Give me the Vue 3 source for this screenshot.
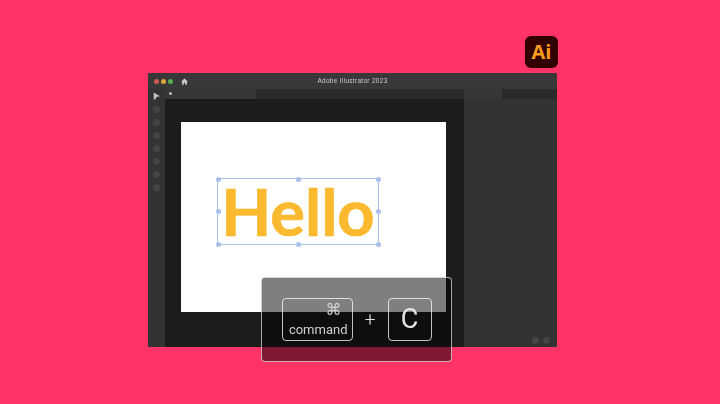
<script setup>
const tools = [0, 1, 2, 3, 4, 5, 6]
const handles = [
  { x: 0, y: 0 }, { x: 50, y: 0 }, { x: 100, y: 0 },
  { x: 0, y: 50 }, { x: 100, y: 50 },
  { x: 0, y: 100 }, { x: 50, y: 100 }, { x: 100, y: 100 },
]
</script>

<template>
  <main class="page">
    <div class="stage">
      <div class="ai-logo">Ai</div>

      <section class="window">
        <header class="titlebar">
          <div class="lights">
            <i class="red"></i>
            <i class="yellow"></i>
            <i class="green"></i>
          </div>
          <svg class="home" viewBox="0 0 12 12" width="7" height="7">
            <path d="M6 1 L12 6.5 H10.2 V11.5 H7.2 V8 H4.8 V11.5 H1.8 V6.5 H0 Z" fill="#c9c9c9" />
          </svg>
          <div class="title">Adobe Illustrator 2023</div>
        </header>

        <div class="body">
          <aside class="toolbar">
            <svg class="arrow" viewBox="0 0 10 10" width="7" height="8">
              <path d="M1 0 L10 5.5 L5.5 6 L3 10 L1 10 Z" fill="#c4c4c4" />
            </svg>
            <span v-for="t in tools" :key="t" class="tool"></span>
          </aside>

          <div class="center">
            <div class="tabs">
              <div class="tab"><i></i></div>
            </div>
            <div class="canvas">
              <div class="artboard">
                <div class="selection">
                  <span class="hello">Hello</span>
                  <i
                    v-for="h in handles"
                    :key="h.x + '-' + h.y"
                    class="handle"
                    :style="{ left: h.x + '%', top: h.y + '%' }"
                  ></i>
                </div>
              </div>
            </div>
          </div>

          <aside class="panel">
            <div class="panel-top">
              <div class="panel-tab"></div>
              <div class="panel-tab-dark"></div>
            </div>
            <div class="panel-foot">
              <i></i>
              <i></i>
            </div>
          </aside>
        </div>
      </section>

      <div class="shortcut">
        <div class="key key-command">
          <span class="glyph">⌘</span>
          <span class="word">command</span>
        </div>
        <span class="plus">+</span>
        <div class="key key-c">C</div>
      </div>
    </div>
  </main>
</template>

<style>
html,
body {
  margin: 0;
  background: #ff3366;
}
</style>

<style scoped>
.page {
  width: 720px;
  height: 404px;
  overflow: hidden;
  background: #ff3366;
  font-family: "Liberation Sans", Arial, sans-serif;
}

.stage {
  position: relative;
  width: 720px;
  height: 404px;
  padding: 73px 163px 0 148px;
  box-sizing: border-box;
  filter: blur(0.5px);
}

.ai-logo {
  position: absolute;
  left: 525px;
  top: 36px;
  width: 33px;
  height: 32px;
  border-radius: 6px;
  background: #330000;
  color: #f79c1e;
  font-family: "Open Sans", sans-serif;
  font-weight: 700;
  font-size: 20px;
  line-height: 32px;
  text-align: center;
}

.window {
  width: 409px;
  height: 274px;
  background: #323232;
  display: flex;
  flex-direction: column;
  border-radius: 2px 2px 0 0;
  overflow: hidden;
}

.titlebar {
  height: 16px;
  flex: none;
  background: #383838;
  display: flex;
  align-items: center;
  position: relative;
  padding-left: 5.5px;
}

.lights {
  display: flex;
  gap: 2px;
}

.lights i {
  width: 5px;
  height: 5px;
  border-radius: 50%;
}

.red { background: #cf5a55; }
.yellow { background: #dba83f; }
.green { background: #58ad4e; }

.home {
  margin-left: 8.5px;
}

.title {
  position: absolute;
  left: 0;
  right: 0;
  top: 0;
  text-align: center;
  font-size: 6.5px;
  line-height: 15px;
  letter-spacing: 0.3px;
  color: #cccccc;
}

.body {
  flex: 1;
  display: flex;
  min-height: 0;
}

.toolbar {
  width: 17px;
  flex: none;
  background: #333333;
  display: flex;
  flex-direction: column;
  align-items: center;
  padding-top: 3px;
  gap: 6px;
}

.tool {
  width: 7px;
  height: 7px;
  border-radius: 50%;
  background: #444444;
}

.center {
  flex: 1;
  display: flex;
  flex-direction: column;
  min-width: 0;
}

.tabs {
  height: 10px;
  flex: none;
  background: #2a2a2a;
  display: flex;
}

.tab {
  width: 91px;
  background: #363636;
  padding: 3px 0 0 4px;
  box-sizing: border-box;
}

.tab i {
  display: block;
  width: 3px;
  height: 3px;
  background: #bbbbbb;
  border-radius: 50%;
}

.canvas {
  flex: 1;
  background: #1c1c1c;
  padding: 23px 18px 0 16px;
}

.artboard {
  height: 190px;
  background: #ffffff;
  padding: 56px 0 0 36px;
  box-sizing: border-box;
}

.selection {
  position: relative;
  width: 162px;
  height: 67px;
  border: 1.5px solid #a9c0e8;
  box-sizing: border-box;
  display: flex;
  align-items: center;
  justify-content: center;
}

.hello {
  display: inline-block;
  font-family: Lato, "Open Sans", sans-serif;
  font-weight: 700;
  font-size: 65px;
  line-height: 1;
  color: #fbb92f;
  -webkit-text-stroke: 0.7px #fbb92f;
}

.handle {
  position: absolute;
  width: 5px;
  height: 5px;
  margin: -2.5px 0 0 -2.5px;
  border-radius: 50%;
  background: #a9c0e8;
}

.panel {
  width: 93px;
  flex: none;
  background: #333333;
  display: flex;
  flex-direction: column;
  justify-content: space-between;
}

.panel-top {
  height: 10px;
  display: flex;
}

.panel-tab {
  width: 38px;
  background: #363636;
}

.panel-tab-dark {
  flex: 1;
  background: #2a2a2a;
}

.panel-foot {
  display: flex;
  justify-content: flex-end;
  gap: 4px;
  padding: 0 7px 3px 0;
}

.panel-foot i {
  width: 7px;
  height: 7px;
  border-radius: 50%;
  background: #454545;
}

.shortcut {
  position: absolute;
  left: 261px;
  top: 277px;
  width: 191px;
  height: 85px;
  box-sizing: border-box;
  border: 1.5px solid rgba(255, 255, 255, 0.65);
  border-radius: 4px;
  background: rgba(0, 0, 0, 0.5);
  display: flex;
  align-items: center;
  padding: 0 0 1px 19.5px;
  color: #e4e4e4;
}

.key {
  box-sizing: border-box;
  height: 43px;
  border: 1.5px solid rgba(255, 255, 255, 0.75);
  border-radius: 4px;
}

.key-command {
  width: 71px;
  display: flex;
  flex-direction: column;
  align-items: flex-end;
  padding: 1px 4px 0 0;
}

.glyph {
  font-family: "DejaVu Sans", sans-serif;
  font-size: 16px;
  line-height: 20px;
  padding-right: 6px;
  color: #d0d0d0;
}

.word {
  font-family: Roboto, sans-serif;
  font-weight: 400;
  font-size: 13px;
  line-height: 20px;
  color: #d0d0d0;
}

.plus {
  width: 35px;
  text-align: center;
  font-family: Roboto, sans-serif;
  font-weight: 300;
  font-size: 19px;
}

.key-c {
  width: 44px;
  text-align: center;
  font-family: Roboto, sans-serif;
  font-weight: 400;
  font-size: 27px;
  line-height: 40px;
}
</style>
